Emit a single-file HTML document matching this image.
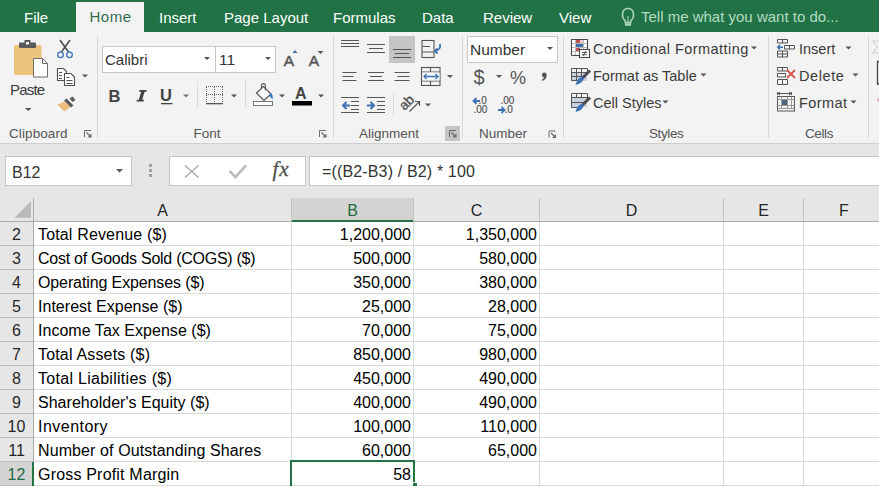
<!DOCTYPE html>
<html><head><meta charset="utf-8">
<style>
*{margin:0;padding:0;box-sizing:border-box}
html,body{width:879px;height:486px;overflow:hidden;background:#fff;font-family:"Liberation Sans",sans-serif}
.a{position:absolute;white-space:nowrap}
#tabs{position:absolute;left:0;top:0;width:879px;height:32px;background:#217346}
.tab{position:absolute;top:9px;font-size:15px;color:#fff;line-height:18px}
#home{position:absolute;left:76px;top:2px;width:68px;height:31px;background:#f3f3f3}
#ribbon{position:absolute;left:0;top:32px;width:879px;height:112px;background:#f3f3f3;border-bottom:1px solid #cfcfcf}
.sep{position:absolute;top:36px;width:1px;height:102px;background:#d8d8d8}
.glabel{position:absolute;top:126px;font-size:13.5px;color:#555;line-height:16px}
.rt{position:absolute;font-size:15px;color:#3a3a3a;line-height:18px}
#fbar{position:absolute;left:0;top:144px;width:879px;height:55px;background:#e6e6e6}
#hdr{position:absolute;left:0;top:199px;width:879px;height:23px;background:#e6e6e6;border-bottom:1px solid #ababab}
.ch{position:absolute;top:200px;height:21px;font-size:16px;color:#222;text-align:center;line-height:21px}
.cv{position:absolute;width:1px;background:#dadada}
.rh{position:absolute;left:0;width:33px;height:24px;font-size:16px;color:#222;text-align:center;line-height:24px;padding-top:1px}
.rl{position:absolute;left:34px;width:845px;height:1px;background:#dadada}
.cell{position:absolute;font-size:16px;color:#000;line-height:24px;height:24px}
</style></head><body>
<div id="tabs"></div>
<div id="home"></div>
<div class="tab" style="left:24px">File</div>
<div class="tab" style="left:89.5px;top:8px;letter-spacing:0.5px;color:#356d4f">Home</div>
<div class="tab" style="left:159px">Insert</div>
<div class="tab" style="left:224px">Page Layout</div>
<div class="tab" style="left:333px">Formulas</div>
<div class="tab" style="left:422px">Data</div>
<div class="tab" style="left:483px">Review</div>
<div class="tab" style="left:559px">View</div>
<div class="tab" style="left:641px;top:8px;color:#b3dcc2">Tell me what you want to do...</div>
<svg class="a" style="left:618px;top:5px" width="20" height="24"><path d="M7 15.5 C3.2 12.5 3.5 3.5 10 3.5 C16.5 3.5 16.8 12.5 13 15.5 L12.6 17.6 H7.4 Z" fill="none" stroke="#a8d6b6" stroke-width="1.6"/><path d="M10 11 v6" stroke="#a8d6b6" stroke-width="1"/><rect x="7" y="18.4" width="6" height="2.4" fill="#a8d6b6"/></svg>

<div id="ribbon"></div>
<div class="sep" style="left:97px"></div>
<div class="sep" style="left:333px"></div>
<div class="sep" style="left:462px"></div>
<div class="sep" style="left:563px"></div>
<div class="sep" style="left:768px"></div>
<div class="sep" style="left:868px"></div>
<div class="glabel" style="left:9px;letter-spacing:0.1px">Clipboard</div>

<!-- clipboard -->
<svg class="a" style="left:0;top:32px" width="879" height="111" viewBox="0 32 879 111">
 <g id="paste">
  <rect x="14" y="45" width="27.5" height="30" rx="2" fill="#ecc57c"/>
  <rect x="19" y="42.5" width="17" height="5.5" rx="1" fill="#5b5b5b"/>
  <rect x="24.5" y="40" width="6" height="4" fill="#5b5b5b"/>
  <rect x="26" y="42" width="3" height="2.5" fill="#fff"/>
  <path d="M33.5 58.5 H42.5 L47.5 63.5 V77 H33.5 Z" fill="#fff" stroke="#6b6b6b" stroke-width="1"/>
  <path d="M42.5 58.5 V63.5 H47.5" fill="none" stroke="#6b6b6b" stroke-width="1"/>
 </g>
 <path d="M25 108 h6.5 l-3.25 3 z" fill="#555"/>
 <!-- scissors -->
 <g stroke="#505050" stroke-width="1.6" fill="none">
  <path d="M60 40 L68.5 52"/><path d="M70 40 L61.5 52"/>
 </g>
 <g stroke="#4a7cc0" stroke-width="1.4" fill="none">
  <circle cx="60.5" cy="54.8" r="2.8"/><circle cx="69.5" cy="54.8" r="2.8"/>
 </g>
 <!-- copy -->
 <g fill="#fff" stroke="#505050" stroke-width="1.1">
  <path d="M57.5 68.5 H63.5 L66.5 71.5 V80.5 H57.5 Z"/>
  <path d="M64.5 73.5 H71 L74.5 77 V85.5 H64.5 Z"/>
 </g>
 <g stroke="#505050" stroke-width="1">
  <path d="M59 72.5 h3 M59 75.5 h3 M59 78.5 h3 M66.5 77.5 h3 M66.5 80.5 h6 M66.5 83.5 h6"/>
 </g>
 <path d="M82 74.5 h6 l-3 3 z" fill="#555"/>
 <!-- format painter -->
 <path d="M57.5 104.5 L64.5 101.5 L70.5 107 L64 111.5 Z" fill="#eabd7a"/>
 <path d="M64 100.5 L66.5 98.5 L73.5 105.5 L71 107.5 Z" fill="#5a5a5a"/>
 <path d="M69.5 98.5 L72.5 96.5 L75.5 100 L72.5 102 Z" fill="#5a5a5a"/>
 <g transform="translate(84 130)"><path d="M0.5 7 V0.5 H7" stroke="#6a6a6a" stroke-width="1" fill="none"/><path d="M2.5 2.5 L6.5 6.5" stroke="#6a6a6a" stroke-width="1.2"/><path d="M7.5 3.5 V7.5 H3.5 Z" fill="#6a6a6a"/></g>
</svg>
<div class="rt" style="left:10px;top:81px;font-size:15px;letter-spacing:-0.8px">Paste</div>

<div class="glabel" style="left:193.5px">Font</div>

<!-- font group -->
<div class="a" style="left:102px;top:46px;width:174px;height:27px;background:#fff;border:1px solid #c6c6c6"></div>
<div class="a" style="left:215px;top:46px;width:1px;height:27px;background:#c6c6c6"></div>
<div class="rt" style="left:105px;top:51px;font-size:15px;color:#333">Calibri</div>
<div class="rt" style="left:219px;top:51px;font-size:15.5px;color:#333">11</div>
<svg class="a" style="left:0;top:32px" width="879" height="111" viewBox="0 32 879 111">
 <path d="M204 57 h6 l-3 3 z M265 57 h6 l-3 3 z" fill="#555"/>
 <text x="283.8" y="65.5" font-size="15.5" fill="#555" stroke="#555" stroke-width="0.5" font-family="Liberation Sans">A</text>
 <path d="M292.5 53 l2.5 -3 l2.5 3 z" fill="#3d6fa8"/>
 <text x="308.8" y="65.5" font-size="15.5" fill="#555" stroke="#555" stroke-width="0.5" font-family="Liberation Sans">A</text>
 <path d="M317.5 51 h6 l-3 3 z" fill="#555"/>
 <text x="108.5" y="101.8" font-size="16.5" font-weight="bold" fill="#444" font-family="Liberation Sans">B</text>
 <path d="M139.5 90 H146.8 L146.4 91.8 H144.6 L142.2 99.8 H144 L143.6 101.6 H136.5 L136.9 99.8 H138.8 L141.2 91.8 H139.1 Z" fill="#444"/>
 <text x="160" y="100.8" font-size="16.5" font-weight="bold" fill="#444" font-family="Liberation Sans">U</text>
 <rect x="161" y="103" width="11.5" height="1.3" fill="#444"/>
 <path d="M183 94.5 h6 l-3 3 z" fill="#777"/>
 <rect x="197" y="82" width="1" height="26" fill="#dcdcdc"/>
 <g fill="#666">
  <path d="M206 86.5 h17 M206 94.5 h17 M206.5 87 v16 M214.5 87 v16 M222.5 87 v16" stroke="#666" stroke-width="1" stroke-dasharray="1 1"/>
  <rect x="206" y="103" width="17" height="1.3" fill="#555"/>
 </g>
 <path d="M231 94.5 h6 l-3 3 z" fill="#555"/>
 <rect x="245" y="80" width="1" height="27" fill="#dcdcdc"/>
 <rect x="253.5" y="101.5" width="19" height="4" fill="#fff" stroke="#777" stroke-width="1"/>
 <path d="M256.5 93 L263.5 86.5 L271 94 L264 100.5 Z" fill="#fff" stroke="#555" stroke-width="1.2"/>
 <path d="M261.5 88.5 v-3 a1.9 1.9 0 0 1 3.8 0 v5" fill="none" stroke="#555" stroke-width="1.1"/>
 <path d="M270.5 93 q3 1.8 2 6.5 q-2.5 -2.5 -3.5 -4.5 z" fill="#3f78c0"/>
 <path d="M279 94.5 h6 l-3 3 z" fill="#555"/>
 <text x="295" y="99" font-size="16" font-weight="bold" fill="#444" font-family="Liberation Sans">A</text>
 <rect x="292" y="101" width="20" height="4.5" fill="#000"/>
 <path d="M318 94.5 h6 l-3 3 z" fill="#555"/>
 <g transform="translate(319 130)"><path d="M0.5 7 V0.5 H7" stroke="#6a6a6a" stroke-width="1" fill="none"/><path d="M2.5 2.5 L6.5 6.5" stroke="#6a6a6a" stroke-width="1.2"/><path d="M7.5 3.5 V7.5 H3.5 Z" fill="#6a6a6a"/></g>
</svg>
<!-- alignment group -->
<div class="a" style="left:389px;top:36px;width:26px;height:27px;background:#c5c5c5"></div>
<svg class="a" style="left:0;top:32px" width="879" height="111" viewBox="0 32 879 111">
 <g stroke="#555" stroke-width="1.2">
  <path d="M341 40.5 h18 M341 43.5 h18 M341 46.5 h18"/>
  <path d="M367 44.5 h18 M369 48.5 h14 M367 52.5 h18"/>
  <path d="M393 49.5 h18 M395 53.5 h14 M393 57.5 h18"/>
  <path d="M342.5 72.5 h14 M342.5 76.5 h11 M342.5 80.5 h14"/>
  <path d="M368 72.5 h16 M370 76.5 h12 M368 80.5 h16"/>
  <path d="M394.5 72.5 h15 M397.5 76.5 h12 M394.5 80.5 h15"/>
  <path d="M341 97.5 h18 M351 101.5 h8 M351 105.5 h8 M351 109.5 h8 M341 112.5 h18"/>
  <path d="M367 97.5 h18 M377 101.5 h8 M377 105.5 h8 M377 109.5 h8 M367 112.5 h18"/>
 </g>
 <g stroke="#3e72b3" stroke-width="2" fill="none">
  <path d="M350 105.5 h-7 M346.5 102 l-3.5 3.5 l3.5 3.5"/>
  <path d="M367 105.5 h7 M370.5 102 l3.5 3.5 l-3.5 3.5"/>
 </g>
 <g fill="none" stroke="#555" stroke-width="1.1">
  <rect x="422" y="40.5" width="12" height="17"/>
  <path d="M422 46.5 h8 M422 52 h12"/>
  <rect x="421.5" y="67.5" width="18.5" height="18"/>
  <path d="M421.5 72 h18.5 M421.5 81 h18.5 M430.5 67.5 v4.5 M430.5 81 v4.5"/>
 </g>
 <rect x="422.2" y="72.5" width="17.3" height="8" fill="#f3f8fc"/>
 <g fill="none" stroke="#3e72b3" stroke-width="1.3">
  <path d="M424 76.5 h14 M426.5 74 l-2.5 2.5 l2.5 2.5 M435.5 74 l2.5 2.5 l-2.5 2.5"/>
  <path d="M440 44 q1 6 -5 7 M437.5 48.5 l-2.5 2.5 l2.5 2.5" stroke-width="1.8"/>
 </g>
 <path d="M447 75 h6 l-3 3 z M425 103.5 h6 l-3 3 z" fill="#555"/>
 <rect x="393" y="93" width="1" height="23" fill="#dcdcdc"/>
 <text x="0" y="0" font-size="13.5" fill="#555" stroke="#555" stroke-width="0.4" font-family="Liberation Sans" transform="translate(404.5 111) rotate(-45)">ab</text>
 <path d="M409.5 111.5 L419.5 101.5 M415 101.5 h4.5 v4.5" stroke="#555" stroke-width="1.2" fill="none"/>
</svg>
<div class="a" style="left:445px;top:126px;width:15px;height:15px;background:#c5c5c5"></div>
<svg class="a" style="left:449px;top:130px" width="9" height="9"><g transform="translate(0 0)"><path d="M0.5 7 V0.5 H7" stroke="#6a6a6a" stroke-width="1" fill="none"/><path d="M2.5 2.5 L6.5 6.5" stroke="#6a6a6a" stroke-width="1.2"/><path d="M7.5 3.5 V7.5 H3.5 Z" fill="#6a6a6a"/></g></svg>

<div class="glabel" style="left:359px">Alignment</div>
<div class="glabel" style="left:479px">Number</div>
<div class="glabel" style="left:649px;letter-spacing:-0.4px">Styles</div>
<div class="glabel" style="left:805px;letter-spacing:-0.4px">Cells</div>

<!-- number group -->
<div class="a" style="left:467px;top:36px;width:91px;height:27px;background:#fff;border:1px solid #c6c6c6"></div>
<div class="rt" style="left:470px;top:41px;font-size:15.5px;color:#333">Number</div>
<svg class="a" style="left:0;top:32px" width="879" height="111" viewBox="0 32 879 111">
 <path d="M547 47 h6 l-3 3 z" fill="#555"/>
 <text x="473.5" y="83.5" font-size="20" fill="#555" font-family="Liberation Sans">$</text>
 <path d="M496 75 h6 l-3 3 z" fill="#555"/>
 <text x="510" y="83.8" font-size="18" fill="#555" font-family="Liberation Sans">%</text>
 <circle cx="544.3" cy="75" r="2.4" fill="#555"/><path d="M546.6 75.2 Q546.8 79.3 542.2 80.9 L541.9 79.8 Q544.3 78.5 544.2 76.5 Z" fill="#555"/>
 <g font-size="10" fill="#555" stroke="#555" stroke-width="0.2" font-family="Liberation Sans">
  <text x="478.5" y="104">.0</text><text x="473.5" y="113">.00</text>
  <text x="500.5" y="104">.00</text><text x="504.5" y="113">.0</text>
 </g>
 <g stroke="#3e72b3" stroke-width="1.8" fill="none">
  <path d="M480 101 h-6.5 M476.5 98 l-3 3 l3 3"/>
  <path d="M498 110 h6.5 M501.5 107 l3 3 l-3 3"/>
 </g>
 <g transform="translate(548.5 130.5)"><path d="M0.5 7 V0.5 H7" stroke="#6a6a6a" stroke-width="1" fill="none"/><path d="M2.5 2.5 L6.5 6.5" stroke="#6a6a6a" stroke-width="1.2"/><path d="M7.5 3.5 V7.5 H3.5 Z" fill="#6a6a6a"/></g>
</svg>
<!-- styles group -->
<div class="rt" style="left:593px;top:40px;font-size:14.5px;letter-spacing:0.45px">Conditional Formatting</div>
<div class="rt" style="left:593px;top:67px;font-size:14.5px">Format as Table</div>
<div class="rt" style="left:593px;top:94px;font-size:14.5px">Cell Styles</div>
<svg class="a" style="left:0;top:32px" width="879" height="111" viewBox="0 32 879 111">
 <path d="M751 46.5 h6 l-3 3 z M700.5 73.5 h6 l-3 3 z M662.5 100.5 h6 l-3 3 z" fill="#555"/>
 <!-- CF -->
 <rect x="572" y="40" width="15.5" height="15.5" fill="#fff"/>
 <rect x="576" y="40" width="4" height="3.5" fill="#c0504d"/>
 <rect x="580" y="40" width="3.5" height="3.5" fill="#f2c9c8"/>
 <rect x="576" y="44" width="7.5" height="3.5" fill="#3e6fa8"/>
 <rect x="576" y="48" width="4" height="3.5" fill="#c0504d"/>
 <g fill="none" stroke="#bbb" stroke-width="1">
  <path d="M571.5 43.5 h16 M571.5 47.5 h16 M571.5 51.5 h8 M575.5 39.5 v16 M583.5 39.5 v10"/>
 </g>
 <path d="M571.5 55.5 V39.5 H587.5 V49.5" fill="none" stroke="#4a4a4a" stroke-width="1.1"/>
 <path d="M571.5 55.5 H579.5" fill="none" stroke="#4a4a4a" stroke-width="1.1"/>
 <rect x="579.5" y="49.5" width="10" height="8" fill="#fff" stroke="#4a4a4a" stroke-width="1.1"/>
 <path d="M582 52.5 h5 M582 54.7 h5 M585.8 51 l-2.6 5" stroke="#4a4a4a" stroke-width="0.9" fill="none"/>
 <!-- FaT -->
 <rect x="572" y="73" width="15" height="8" fill="#c8d2de"/>
 <g fill="none" stroke="#555" stroke-width="1">
  <path d="M571.5 68.5 h16 M571.5 72.5 h16 M571.5 76.5 h13 M571.5 80.5 h6 M571.5 68.5 v12 M576.5 68.5 v12 M581.5 68.5 v10 M587.5 68.5 v4"/>
 </g>
 <path d="M590 70.5 L582.5 78" stroke="#4a4a4a" stroke-width="3"/>
 <path d="M582.5 76.5 L584 78 Q583 82 578.5 84 L575.5 85 L576.5 82 Q578 77.5 582.5 76.5 Z" fill="#3e72b3"/>
 <!-- Cell styles -->
 <rect x="572" y="98" width="15" height="9" fill="#c8d2de"/>
 <g fill="none" stroke="#555" stroke-width="1">
  <path d="M571.5 93.5 h16 v5 M571.5 93.5 v14 h6 M571.5 97.5 h16 M571.5 102.5 h13 M576.5 93.5 v3.5 M581.5 93.5 v3.5"/>
 </g>
 <path d="M590 97.5 L582.5 105" stroke="#4a4a4a" stroke-width="3"/>
 <path d="M582.5 103.5 L584 105 Q583 109 578.5 111 L575.5 112 L576.5 109 Q578 104.5 582.5 103.5 Z" fill="#3e72b3"/>
</svg>
<!-- cells group -->
<div class="rt" style="left:799px;top:40px;font-size:14.5px">Insert</div>
<div class="rt" style="left:799px;top:67px;font-size:14.5px;letter-spacing:0.6px">Delete</div>
<div class="rt" style="left:799px;top:94px;font-size:14.5px;letter-spacing:0.4px">Format</div>
<svg class="a" style="left:0;top:32px" width="879" height="111" viewBox="0 32 879 111">
 <path d="M845.5 46.5 h6 l-3 3 z M852.5 73.5 h6 l-3 3 z M850.5 100.5 h6 l-3 3 z" fill="#555"/>
 <g fill="none" stroke="#555" stroke-width="1">
  <path d="M777.5 39.5 h10 v3.5 h-10 z M782.5 39.5 v3.5"/>
  <path d="M784.5 45.5 h10 v3.5 h-10 z M789.5 45.5 v3.5"/>
  <path d="M777.5 51 h10 v6 h-10 z M777.5 54 h10 M782.5 51 v6"/>
  <path d="M777.5 67.5 h10 v3.5 h-10 z M782.5 67.5 v3.5"/>
  <path d="M777.5 73.5 h8 v3.5 h-8 z"/>
  <path d="M777.5 79.5 h10 v5 h-10 z M782.5 79.5 v5"/>
 </g>
 <path d="M783 47.2 h-5 M780 45 l-2.2 2.2 l2.2 2.2" stroke="#3e72b3" stroke-width="1.6" fill="none"/>
 <path d="M787 70 l8 8 M795 70 l-8 8" stroke="#d9534f" stroke-width="1.8"/>
 <g fill="none" stroke="#555" stroke-width="1">
  <path d="M777.5 93.5 h14 M777.5 92 v3 M791.5 92 v3 M780 92 l-2 1.5 l2 1.5 M789 92 l2 1.5 l-2 1.5"/>
  <rect x="777.5" y="96.5" width="17" height="14.5"/>
 </g>
 <g fill="none" stroke="#999" stroke-width="1">
  <path d="M777.5 99.5 h17 M777.5 105.5 h17 M777.5 108.5 h17 M781.5 96.5 v12 M787.5 96.5 v12 M791.5 96.5 v12"/>
 </g>
 <rect x="782" y="100" width="5" height="5" fill="#4f6280"/>
 <path d="M879 61.5 h-1.5 v22.5 h1.5" stroke="#444" stroke-width="1.3" fill="none"/>
 <path d="M879 41 h-6 l4 6 l-4 6 h6" stroke="#d2d2d2" stroke-width="1.2" fill="none"/>
 <path d="M876 100 l3 -3 v5 z" fill="#e9b3b3"/>
</svg>


<div id="fbar"></div>
<div class="a" style="left:5px;top:156px;width:127px;height:30px;background:#fff;border:1px solid #c6c6c6"></div>
<div class="a" style="left:12px;top:163.5px;font-size:16px;color:#333;line-height:18px">B12</div>
<div class="a" style="left:169px;top:156px;width:137px;height:30px;background:#fff;border:1px solid #c6c6c6"></div>
<div class="a" style="left:309px;top:156px;width:570px;height:30px;background:#fff;border:1px solid #c6c6c6;border-right:none"></div>
<div class="a" style="left:322px;top:163px;font-size:16px;letter-spacing:0.15px;color:#333;line-height:18px">=((B2-B3) / B2) * 100</div>
<svg class="a" style="left:0;top:143px" width="879" height="56" viewBox="0 143 879 56">
 <path d="M116 169 h7 l-3.5 3.5 z" fill="#555"/>
 <rect x="149" y="164" width="3" height="3" fill="#a0a0a0"/>
 <rect x="149" y="169" width="3" height="3" fill="#a0a0a0"/>
 <rect x="149" y="174" width="3" height="3" fill="#a0a0a0"/>
 <path d="M185 165.5 L198.5 177.5 M198.5 165.5 L185 177.5" stroke="#b0b0b0" stroke-width="1.6"/>
 <path d="M229.5 171 L235.5 177 L246 165.5" stroke="#bdbdbd" stroke-width="2.6" fill="none"/>
 <text x="272.5" y="176" font-size="21" letter-spacing="0.8" font-style="italic" fill="#555" stroke="#555" stroke-width="0.35" font-family="Liberation Serif">fx</text>
</svg>

<div id="grid"><div class="a" style="left:0;top:198px;width:879px;height:23px;background:#e6e6e6"></div>
<div class="a" style="left:292px;top:198px;width:121px;height:22px;background:#d3d3d3"></div>
<div class="a" style="left:0;top:221px;width:879px;height:1px;background:#ababab"></div>
<div class="a" style="left:292px;top:220px;width:121px;height:2px;background:#217346"></div>
<div class="a" style="left:0;top:222px;width:33px;height:264px;background:#e6e6e6"></div>
<div class="a" style="left:0;top:462px;width:32px;height:24px;background:#d3d3d3"></div>
<svg class="a" style="left:0;top:199px" width="33" height="22"><path d="M31 2.3 V18.8 H14.5 Z" fill="#b9b9b9"/></svg>
<div class="ch" style="left:34px;width:257px;color:#262626">A</div>
<div class="ch" style="left:292px;width:121px;color:#1e6b41">B</div>
<div class="ch" style="left:414px;width:125px;color:#262626">C</div>
<div class="ch" style="left:540px;width:183px;color:#262626">D</div>
<div class="ch" style="left:724px;width:79px;color:#262626">E</div>
<div class="ch" style="left:804px;width:80px;color:#262626">F</div>
<div class="rl" style="top:245px"></div>
<div class="a" style="left:0;top:245px;width:33px;height:1px;background:#bcbcbc"></div>
<div class="rl" style="top:269px"></div>
<div class="a" style="left:0;top:269px;width:33px;height:1px;background:#bcbcbc"></div>
<div class="rl" style="top:293px"></div>
<div class="a" style="left:0;top:293px;width:33px;height:1px;background:#bcbcbc"></div>
<div class="rl" style="top:317px"></div>
<div class="a" style="left:0;top:317px;width:33px;height:1px;background:#bcbcbc"></div>
<div class="rl" style="top:341px"></div>
<div class="a" style="left:0;top:341px;width:33px;height:1px;background:#bcbcbc"></div>
<div class="rl" style="top:365px"></div>
<div class="a" style="left:0;top:365px;width:33px;height:1px;background:#bcbcbc"></div>
<div class="rl" style="top:389px"></div>
<div class="a" style="left:0;top:389px;width:33px;height:1px;background:#bcbcbc"></div>
<div class="rl" style="top:413px"></div>
<div class="a" style="left:0;top:413px;width:33px;height:1px;background:#bcbcbc"></div>
<div class="rl" style="top:437px"></div>
<div class="a" style="left:0;top:437px;width:33px;height:1px;background:#bcbcbc"></div>
<div class="rl" style="top:461px"></div>
<div class="a" style="left:0;top:461px;width:33px;height:1px;background:#bcbcbc"></div>
<div class="rl" style="top:485px"></div>
<div class="a" style="left:0;top:485px;width:33px;height:1px;background:#bcbcbc"></div>
<div class="a" style="left:33px;top:198px;width:1px;height:288px;background:#ababab"></div>
<div class="cv" style="left:291px;top:222px;height:264px"></div>
<div class="a" style="left:291px;top:198px;width:1px;height:23px;background:#c3c3c3"></div>
<div class="cv" style="left:413px;top:222px;height:264px"></div>
<div class="a" style="left:413px;top:198px;width:1px;height:23px;background:#c3c3c3"></div>
<div class="cv" style="left:539px;top:222px;height:264px"></div>
<div class="a" style="left:539px;top:198px;width:1px;height:23px;background:#c3c3c3"></div>
<div class="cv" style="left:723px;top:222px;height:264px"></div>
<div class="a" style="left:723px;top:198px;width:1px;height:23px;background:#c3c3c3"></div>
<div class="cv" style="left:803px;top:222px;height:264px"></div>
<div class="a" style="left:803px;top:198px;width:1px;height:23px;background:#c3c3c3"></div>
<div class="a" style="left:32px;top:462px;width:2px;height:24px;background:#217346"></div>
<div class="rh" style="top:222px;color:#262626">2</div>
<div class="cell" style="left:38px;top:223px;letter-spacing:0.156px">Total Revenue ($)</div>
<div class="cell" style="left:292px;width:119px;text-align:right;top:223px">1,200,000</div>
<div class="cell" style="left:414px;width:123px;text-align:right;top:223px">1,350,000</div>
<div class="rh" style="top:246px;color:#262626">3</div>
<div class="cell" style="left:38px;top:247px;letter-spacing:-0.264px">Cost of Goods Sold (COGS) ($)</div>
<div class="cell" style="left:292px;width:119px;text-align:right;top:247px">500,000</div>
<div class="cell" style="left:414px;width:123px;text-align:right;top:247px">580,000</div>
<div class="rh" style="top:270px;color:#262626">4</div>
<div class="cell" style="left:38px;top:271px;letter-spacing:-0.114px">Operating Expenses ($)</div>
<div class="cell" style="left:292px;width:119px;text-align:right;top:271px">350,000</div>
<div class="cell" style="left:414px;width:123px;text-align:right;top:271px">380,000</div>
<div class="rh" style="top:294px;color:#262626">5</div>
<div class="cell" style="left:38px;top:295px;letter-spacing:0.026px">Interest Expense ($)</div>
<div class="cell" style="left:292px;width:119px;text-align:right;top:295px">25,000</div>
<div class="cell" style="left:414px;width:123px;text-align:right;top:295px">28,000</div>
<div class="rh" style="top:318px;color:#262626">6</div>
<div class="cell" style="left:38px;top:319px;letter-spacing:0.033px">Income Tax Expense ($)</div>
<div class="cell" style="left:292px;width:119px;text-align:right;top:319px">70,000</div>
<div class="cell" style="left:414px;width:123px;text-align:right;top:319px">75,000</div>
<div class="rh" style="top:342px;color:#262626">7</div>
<div class="cell" style="left:38px;top:343px;letter-spacing:0.173px">Total Assets ($)</div>
<div class="cell" style="left:292px;width:119px;text-align:right;top:343px">850,000</div>
<div class="cell" style="left:414px;width:123px;text-align:right;top:343px">980,000</div>
<div class="rh" style="top:366px;color:#262626">8</div>
<div class="cell" style="left:38px;top:367px;letter-spacing:0.285px">Total Liabilities ($)</div>
<div class="cell" style="left:292px;width:119px;text-align:right;top:367px">450,000</div>
<div class="cell" style="left:414px;width:123px;text-align:right;top:367px">490,000</div>
<div class="rh" style="top:390px;color:#262626">9</div>
<div class="cell" style="left:38px;top:391px;letter-spacing:0.022px">Shareholder's Equity ($)</div>
<div class="cell" style="left:292px;width:119px;text-align:right;top:391px">400,000</div>
<div class="cell" style="left:414px;width:123px;text-align:right;top:391px">490,000</div>
<div class="rh" style="top:414px;color:#262626">10</div>
<div class="cell" style="left:38px;top:415px;letter-spacing:0.475px">Inventory</div>
<div class="cell" style="left:292px;width:119px;text-align:right;top:415px">100,000</div>
<div class="cell" style="left:414px;width:123px;text-align:right;top:415px">110,000</div>
<div class="rh" style="top:438px;color:#262626">11</div>
<div class="cell" style="left:38px;top:439px;letter-spacing:0.100px">Number of Outstanding Shares</div>
<div class="cell" style="left:292px;width:119px;text-align:right;top:439px">60,000</div>
<div class="cell" style="left:414px;width:123px;text-align:right;top:439px">65,000</div>
<div class="rh" style="top:462px;color:#1e6b41">12</div>
<div class="cell" style="left:38px;top:463px;letter-spacing:0.189px">Gross Profit Margin</div>
<div class="cell" style="left:292px;width:119px;text-align:right;top:463px">58</div>
<div class="a" style="left:290px;top:460px;width:125px;height:28px;border:2px solid #217346"></div>
<div class="a" style="left:412px;top:482px;width:6px;height:6px;background:#217346;border:1px solid #fff"></div></div>
</body></html>
